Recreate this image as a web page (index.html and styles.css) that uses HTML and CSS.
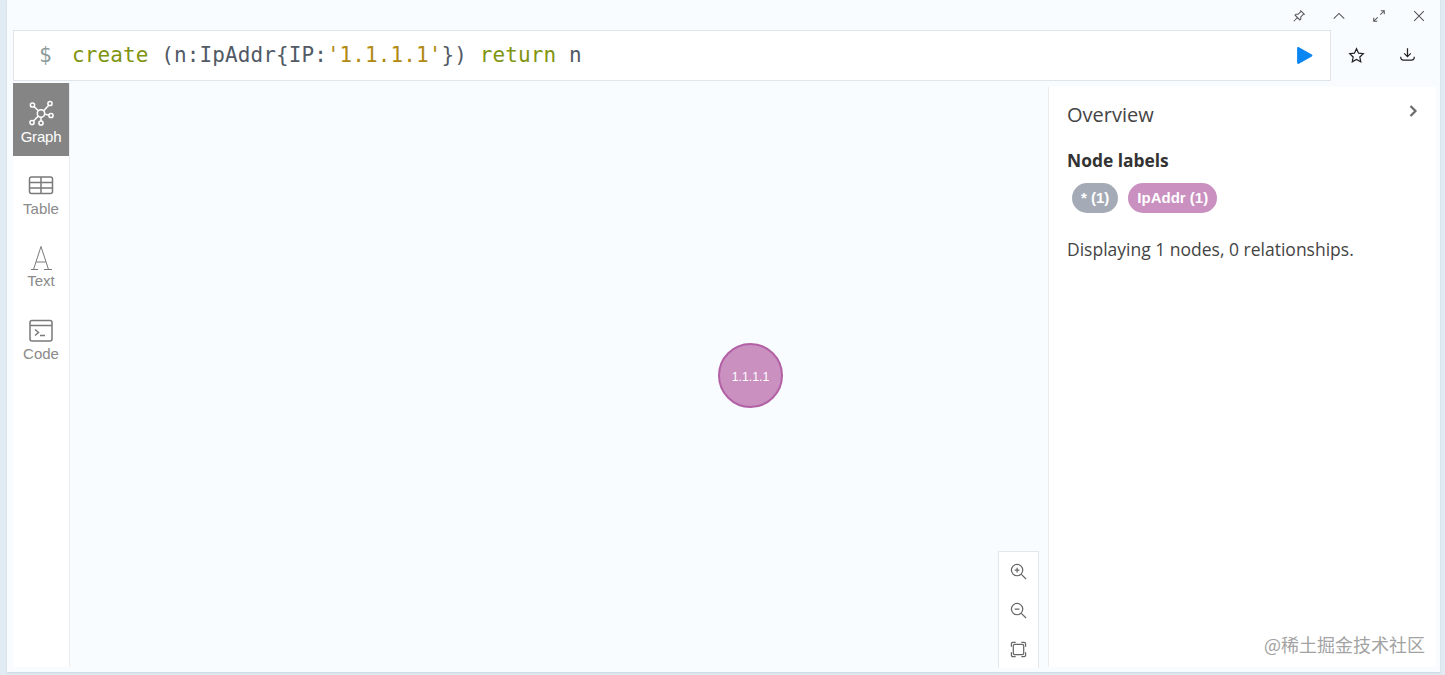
FILE: index.html
```html
<!DOCTYPE html>
<html lang="zh">
<head>
<meta charset="utf-8">
<title>Neo4j Browser</title>
<link rel="stylesheet" href="styles.css">
</head>
<body>
<div class="frame">
  <div class="win-controls">
    <svg class="win-icon" viewBox="0 0 16 16"><path d="M9.500 1.500l5 5M10.500 2.500L7 6 4.500 6 3.500 7l5.500 5.500 1-1V9l3.500-3.500M6 10l-4 4"/></svg>
    <svg class="win-icon" viewBox="0 0 16 16"><path d="M2 11l6-6 6 6"/></svg>
    <svg class="win-icon" viewBox="0 0 16 16"><path d="M9.500 6.500L14 2M10 2h4v4M6.500 9.500L2 14M2 10v4h4"/></svg>
    <svg class="win-icon" viewBox="0 0 16 16"><path d="M2.500 2.500l11 11M13.500 2.500l-11 11"/></svg>
  </div>
  <div class="top-row">
    <div class="editor">
      <span class="prompt">$</span>
      <code class="query"><span class="kw">create</span> (n:IpAddr{IP:<span class="str">'1.1.1.1'</span>}) <span class="kw">return</span> n</code>
      <svg class="run" viewBox="0 0 16 18"><path d="M1 2.200v13.600c0 .9.900 1.400 1.700 1L14.900 10c.8-.5.800-1.600 0-2L2.700 1.200C1.900.8 1 1.300 1 2.200z"/></svg>
    </div>
    <div class="editor-actions">
      <svg class="act" viewBox="0 0 18 18"><path d="M9 1.800l2.200 4.700 5 .6-3.700 3.500 1 5L9 13.100l-4.500 2.500 1-5L1.800 7.100l5-.6z"/></svg>
      <svg class="act" viewBox="0 0 18 18"><path d="M9 2.500v8.500M5.500 7.800L9 11.300l3.500-3.500M1.800 11.500c0 2.500 1 3.500 3 3.500h8.400c2 0 3-1 3-3.500"/></svg>
    </div>
  </div>
  <div class="main">
    <nav class="sidebar">
      <div class="tab active">
        <svg class="tab-icon" viewBox="0 0 26 26"><g fill="none"><circle cx="13" cy="13.500" r="3.700"/><circle cx="4.500" cy="5" r="2.100"/><circle cx="22" cy="3.500" r="2.100"/><circle cx="23" cy="15.500" r="2.100"/><circle cx="13" cy="23" r="2.100"/><circle cx="4" cy="22.500" r="2.100"/><path d="M6 6.500l4.300 4.300M20.700 5.200l-5.200 5.700M16.600 14.200l4.400.9M13 17.200v3.700M10.300 16L5.500 21"/></g></svg>
        <span class="tab-label-active">Graph</span>
      </div>
      <div class="tab">
        <svg class="tab-icon" viewBox="0 0 26 26"><rect x="1.500" y="4" width="23" height="16.500" rx="2"/><path d="M1.500 9.500h23M1.500 15h23M13 4v16.500"/></svg>
        <span>Table</span>
      </div>
      <div class="tab">
        <svg class="tab-icon" viewBox="0 0 26 26"><path class="thin" d="M3 24.500h7M16 24.500h8M5.500 24.500L13 1.500l7.500 23M8 17h10"/></svg>
        <span>Text</span>
      </div>
      <div class="tab">
        <svg class="tab-icon" viewBox="0 0 26 26"><rect x="2" y="2.500" width="22" height="20.500" rx="2"/><path d="M2 7.500h22M7 11.500l3.500 3-3.500 3M12 17.500h5"/></svg>
        <span>Code</span>
      </div>
    </nav>
    <section class="canvas">
      <div class="node">1.1.1.1</div>
      <div class="zoom-box">
        <svg class="zoom-icon" viewBox="0 0 18 18"><circle cx="7.500" cy="7.500" r="6"/><path d="M12 12l5 5M7.500 5v5M5 7.500h5"/></svg>
        <svg class="zoom-icon" viewBox="0 0 18 18"><circle cx="7.500" cy="7.500" r="6"/><path d="M12 12l5 5M5 7.500h5"/></svg>
        <svg class="zoom-icon" viewBox="0 0 18 18"><rect x="3.500" y="3.500" width="11" height="11" rx="1.500"/><path d="M1.500 6V3q0-1.500 1.500-1.500h3M12 1.500h3q1.500 0 1.500 1.500v3M16.500 12v3q0 1.500-1.500 1.500h-3M6 16.500H3q-1.500 0-1.500-1.500v-3"/></svg>
      </div>
    </section>
    <aside class="panel">
      <div class="panel-head">
        <h2>Overview</h2>
        <svg class="chev" viewBox="0 0 10 14"><path d="M2.500 2l5 5-5 5"/></svg>
      </div>
      <h3>Node labels</h3>
      <div class="pills">
        <span class="pill grey">* (1)</span>
        <span class="pill pink">IpAddr (1)</span>
      </div>
      <p class="status">Displaying 1 nodes, 0 relationships.</p>
      <div class="watermark">@稀土掘金技术社区</div>
    </aside>
  </div>
</div>
</body>
</html>
```

FILE: styles.css
```css
* { box-sizing: border-box; }
html, body { margin: 0; height: 100%; }
body { background: #e1ebf3; overflow: hidden; font-family: "Liberation Sans", Arial, sans-serif; }
.frame {
  margin-left: 7px;
  width: 1433px;
  height: 672px;
  background: #f9fcfe;
  padding: 0 4px 5px 6px;
  display: flex;
  flex-direction: column;
  box-shadow: 0 1px 2px #c9d6e0;
}
.win-controls {
  height: 30px;
  display: flex;
  justify-content: flex-end;
  align-items: center;
  gap: 26px;
  padding: 2px 10px 0 0;
}
.win-icon { width: 14px; height: 14px; fill: none; stroke: #555; stroke-width: 1.200; }
.top-row { display: flex; height: 51px; }
.editor {
  width: 1318px;
  background: #fff;
  border: 1px solid #dfe5ea;
  display: flex;
  align-items: center;
  padding: 0 17px 0 25px;
}
.prompt { font: 21px/44px "DejaVu Sans Mono", monospace; color: #8b9a9a; width: 33px; margin-bottom: 2px; }
.query { font: 21px/44px "DejaVu Sans Mono", monospace; color: #525a66; flex: 1; letter-spacing: .1px; margin-bottom: 2px; }
.kw { color: #7f9410; }
.str { color: #b08a12; }
.run { width: 17px; height: 19px; fill: #0b85f2; }
.editor-actions { display: flex; flex: 1; justify-content: space-between; padding: 0 20px 0 17px; align-items: center; }
.act { width: 17px; height: 17px; fill: none; stroke: #222; stroke-width: 1.300; }
.act:last-child { margin-top: -2px; }
.main { display: flex; flex: 1; min-height: 0; padding-top: 2px; }
.sidebar {
  width: 57px;
  background: #fff;
  border-right: 1px solid #e9edf0;
  display: flex;
  flex-direction: column;
}
.tab {
  height: 72.500px;
  display: flex;
  flex-direction: column;
  align-items: center;
  padding-top: 17px;
  color: #8a8a8a;
  font-size: 15px;
  line-height: 20px;
}
.tab.active { background: #858585; color: #fff; }
.tab-label-active { letter-spacing: -.2px; padding-top: 1px; }
.tab-icon { width: 26px; height: 26px; fill: none; stroke: #7a7a7a; stroke-width: 1.500; }
.tab .thin { stroke-width: 1; }
.tab.active .tab-icon { stroke: #fff; }
.canvas { flex: 1; position: relative; background: #f9fcff; }
.node {
  position: absolute;
  left: 648px;
  top: 260px;
  width: 65px;
  height: 65px;
  border-radius: 50%;
  background: #c990c0;
  border: 2px solid #b261a5;
  color: #fff;
  font-size: 12.300px;
  padding-top: 3px;
  display: flex;
  align-items: center;
  justify-content: center;
}
.zoom-box {
  position: absolute;
  left: 928px;
  top: 468px;
  width: 41px;
  height: 117px;
  background: #fff;
  border: 1px solid #e3e8ec;
  border-bottom: 0;
  display: flex;
  flex-direction: column;
  align-items: center;
  gap: 22px;
  padding-top: 11px;
}
.zoom-icon { width: 17px; height: 17px; fill: none; stroke: #666; stroke-width: 1.300; flex: none; }
.panel {
  position: relative;
  width: 388px;
  margin-top: 4px;
  background: #fff;
  border-left: 1px solid #e9edf0;
  padding: 0 17px 0 18px;
  font-family: "Open Sans", sans-serif;
  color: #444;
}
.panel-head { display: flex; justify-content: space-between; align-items: center; height: 55px; }
h2 { margin: 0; font-size: 20px; font-weight: 400; }
.chev { width: 10px; height: 14px; margin: -7px 1px 0 0; fill: none; stroke: #6b6b6b; stroke-width: 2.200; }
h3 { margin: 6px 0 0; font-size: 17.400px; line-height: 24px; font-weight: 700; color: #333; }
.pills { display: flex; gap: 10px; padding: 11px 0 0 5px; }
.pill {
  height: 30px;
  border-radius: 15px;
  color: #fff;
  font: 700 15px/30px "Liberation Sans", sans-serif;
  padding: 0 9px;
}
.grey { background: #a5abb6; }
.pink { background: #c990c0; }
.status { margin: 24px 0 0; font-size: 17.500px; line-height: 24px; }
.watermark {
  position: absolute;
  right: 11px;
  bottom: 10px;
  font: 18px "Noto Sans CJK SC", sans-serif;
  color: #a3a3a3;
  white-space: nowrap;
}
```
